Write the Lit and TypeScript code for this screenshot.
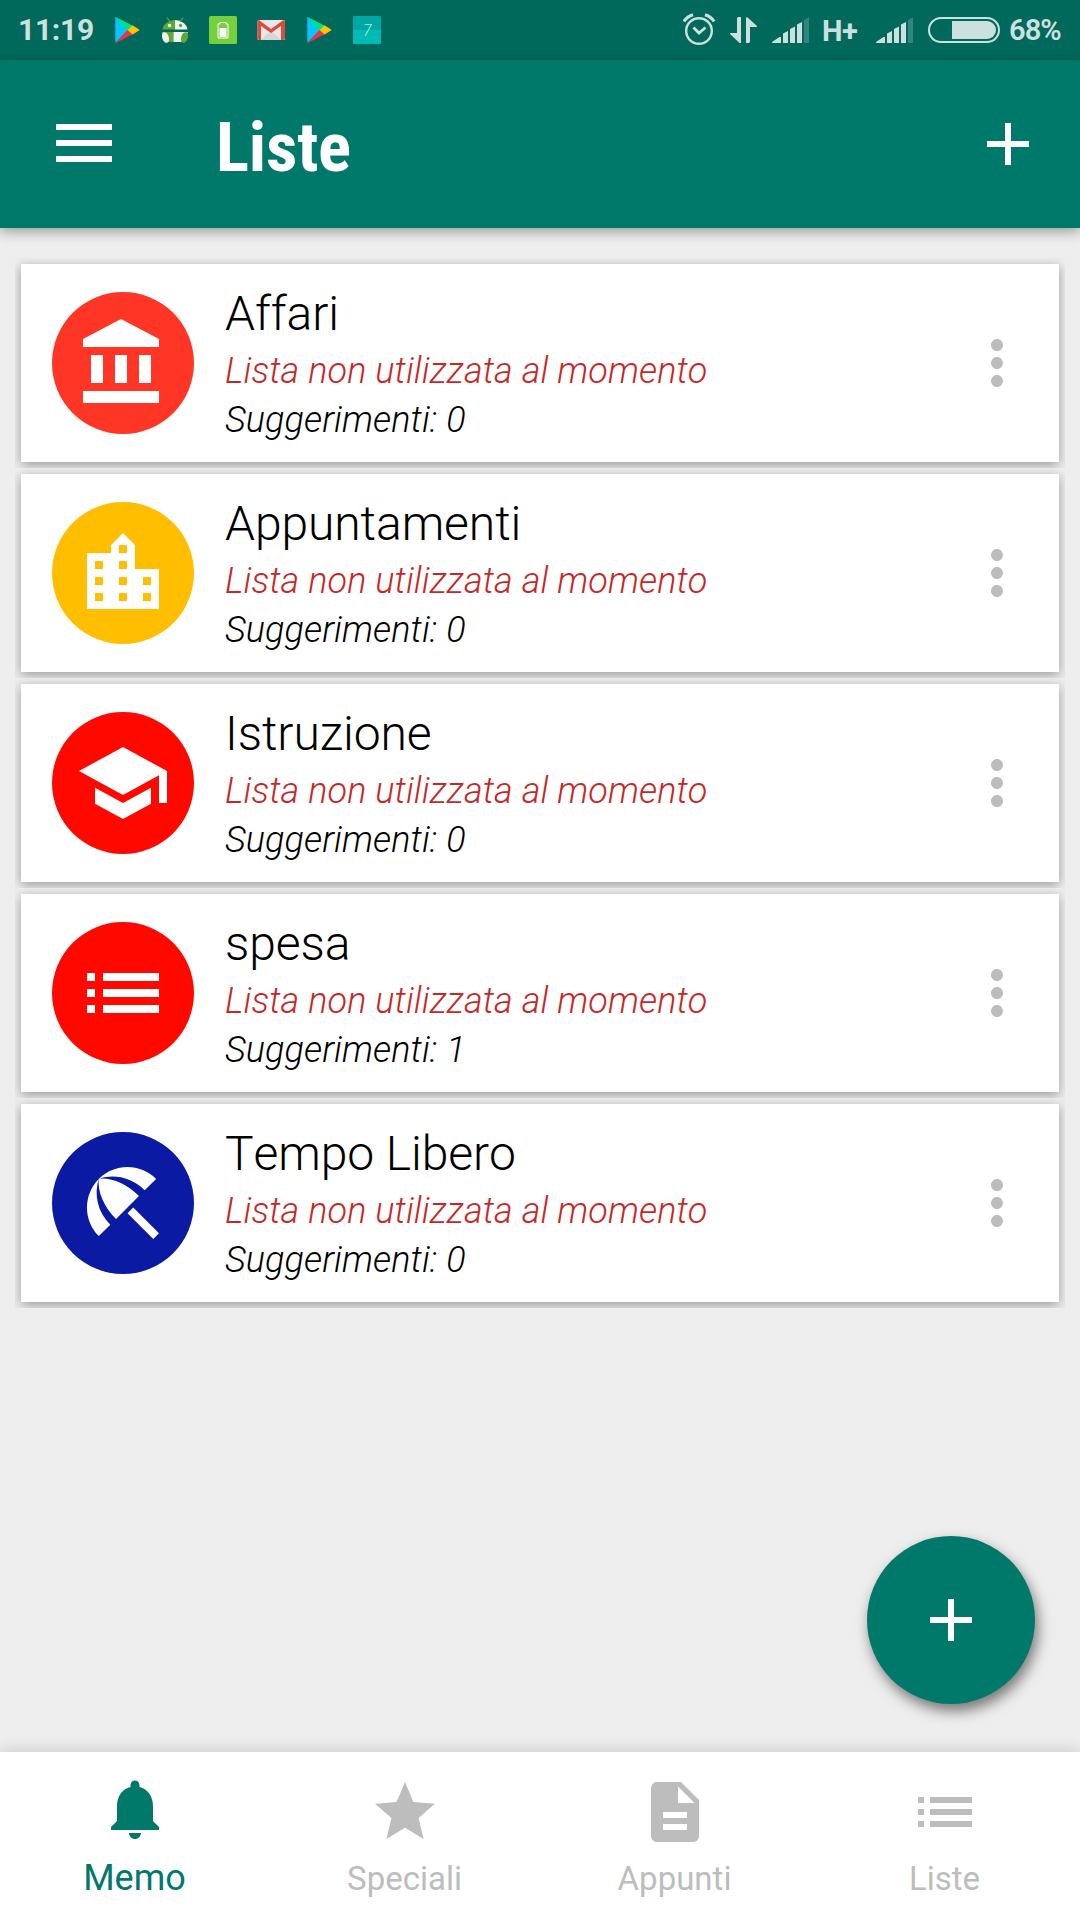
import { LitElement, html, css, svg } from "lit";
import { customElement, property } from "lit/decorators.js";

const ICONS: Record<string, string> = {
  bank: "M4 10v7h3v-7H4zm6 0v7h3v-7h-3zM2 22h19v-3H2v3zm14-12v7h3v-7h-3zm-4.5-9L2 6v2h19V6l-9.5-5z",
  city: "M15 11V5l-3-3-3 3v2H3v14h18V11h-6zm-8 8H5v-2h2v2zm0-4H5v-2h2v2zm0-4H5V9h2v2zm6 8h-2v-2h2v2zm0-4h-2v-2h2v2zm0-4h-2V9h2v2zm0-4h-2V5h2v2zm6 12h-2v-2h2v2zm0-4h-2v-2h2v2z",
  school: "M5 13.18v4L12 21l7-3.82v-4L12 17l-7-3.82zM12 3L1 9l11 6 9-4.91V17h2V9L12 3z",
  list: "M3 13h2v-2H3v2zm0 4h2v-2H3v2zm0-8h2V7H3v2zm4 4h14v-2H7v2zm0 4h14v-2H7v2zM7 7v2h14V7H7z",
  beach: "M13.127 14.56l1.43-1.43 6.44 6.443L19.57 21zm4.293-5.73l2.86-2.86c-3.95-3.95-10.35-3.96-14.3-.02 3.93-1.3 8.31-.25 11.44 2.88zM5.95 5.98c-3.94 3.95-3.93 10.35.02 14.3l2.86-2.86C5.7 14.29 4.65 9.91 5.95 5.98zm.02-.02l-.01.01c-.38 3.01 1.17 6.88 4.3 10.02l5.73-5.73c-3.13-3.13-7.01-4.68-10.02-4.3z",
  bell: "M12 22c1.1 0 2-.9 2-2h-4c0 1.1.89 2 2 2zm6-6v-5c0-3.07-1.64-5.64-4.5-6.32V4c0-.83-.67-1.5-1.5-1.5s-1.5.67-1.5 1.5v.68C7.63 5.36 6 7.92 6 11v5l-2 2v1h16v-1l-2-2z",
  star: "M12 17.27L18.18 21l-1.64-7.03L22 9.24l-7.19-.61L12 2 9.19 8.63 2 9.24l5.46 4.73L5.82 21z",
  note: "M14 2H6c-1.1 0-1.99.9-1.99 2L4 20c0 1.1.89 2 1.99 2H18c1.1 0 2-.9 2-2V8l-6-6zm2 16H8v-2h8v2zm0-4H8v-2h8v2zm-3-5V3.5L18.5 9H13z",
  add: "M19 13h-6v6h-2v-6H5v-2h6V5h2v6h6v2z",
  more: "M12 8c1.1 0 2-.9 2-2s-.9-2-2-2-2 .9-2 2 .9 2 2 2zm0 2c-1.1 0-2 .9-2 2s.9 2 2 2 2-.9 2-2-.9-2-2-2zm0 6c-1.1 0-2 .9-2 2s.9 2 2 2 2-.9 2-2-.9-2-2-2z",
};

@customElement("md-icon")
class MdIcon extends LitElement {
  @property() name = "";
  static styles = css`
    :host { display: block; width: 72px; height: 72px; flex: none; }
    svg { display: block; width: 100%; height: 100%; fill: currentColor; }
  `;
  render() {
    return html`<svg viewBox="0 0 24 24"><path d=${ICONS[this.name] ?? ""} /></svg>`;
  }
}

const playStore = svg`
  <path d="M0 0L0 26L13 13Z" fill="#00c8ff"/>
  <path d="M0 0L17.5 9L12.5 13.5Z" fill="#00e676"/>
  <path d="M0 26.5L12.5 13L17.5 17.6Z" fill="#f4304a"/>
  <path d="M17.3 8.6L24.5 13.2L17.3 17.8L12.3 13.2Z" fill="#ffc400"/>`;

@customElement("status-bar")
class StatusBar extends LitElement {
  static styles = css`
    :host { display: flex; height: 60px; flex: none; background: #00695c; color: #cce1de;
      font: 500 30px/36px Roboto, sans-serif; justify-content: space-between; align-items: flex-start; }
    .side { display: flex; align-items: flex-start; }
    svg { display: block; flex: none; height: 60px; }
    .time { width: 74px; margin-left: 18px; padding-top: 12px; font-weight: 700; letter-spacing: -0.3px; white-space: nowrap; }
    .apps { margin-left: 23px; }
    .net { width: 37px; padding-top: 13px; margin-left: 13px; font-size: 29px; font-weight: 700; letter-spacing: -0.5px; white-space: nowrap; }
    .bars2 { margin-left: 17px; }
    .battery { margin-left: 15px; }
    .pct { width: 71px; padding-top: 12px; margin-left: 9px; font-size: 29px; white-space: nowrap; font-weight: 600; letter-spacing: -0.9px; }
  `;
  bars(cls: string) {
    return html`<svg class=${cls} width="37" viewBox="0 0 37 60" fill="#cce1de">
      <path d="M0 43V42L7.500 37H9V43ZM11 33.500L16 31V43H11ZM18 29L23 26.500V43H18ZM25 24.500L30 22V43H25Z"/>
      <path d="M32 20L37 17.500V43H32Z" opacity=".25"/></svg>`;
  }
  render() {
    return html`
      <div class="side">
        <div class="time">11:19</div>
        <svg class="apps" width="268" viewBox="115 0 268 60">
          <g transform="translate(115.300 16.700)">${playStore}</g>
          <g>
            <path d="M162.500 29.500A13 10 0 0 1 175 20V29.500Z" fill="#5fa832"/>
            <path d="M175 20A13 10 0 0 1 187.500 29.500H175Z" fill="#f2f4f1"/>
            <path d="M167 17.500l3 4.500M183 17.500l-3 4.500" stroke="#5fa832" stroke-width="1.200"/>
            <circle cx="169.500" cy="25.500" r="1.700" fill="#fff"/><circle cx="180.500" cy="25.500" r="1.700" fill="#5fa832"/>
            <path d="M162 32H173.500V42H168L162 35Z" fill="#5fa832"/>
            <path d="M173.500 32H188L182 42H173.500Z" fill="#f2f4f1"/>
            <ellipse cx="165.500" cy="37.500" rx="3.300" ry="5.500" transform="rotate(-18 165.500 37.500)" fill="#f2f4f1"/>
            <ellipse cx="184.500" cy="37.500" rx="3.300" ry="5.500" transform="rotate(18 184.500 37.500)" fill="#5fa832"/>
          </g>
          <rect x="209" y="16" width="28" height="28" rx="1.500" fill="#76cf3c"/>
          <path d="M220 22.500h6v1.500h2v14h-10v-14h2z" fill="none" stroke="#fff" stroke-width="1"/>
          <rect x="219.500" y="28" width="7" height="9" fill="#fff"/>
          <rect x="257.500" y="20" width="27.500" height="20" rx="1.500" fill="#e8e8e8"/>
          <path d="M261 40L271 30.500L281 40Z" fill="#d6d6d6"/>
          <path d="M257.500 21.500L259 20L271 29L283.500 20L285 21.500V38.500L283.500 40H281V26L271 33L261 26V40H259L257.500 38.500Z" fill="#de4a3e"/>
          <g transform="translate(307.300 16.700)">${playStore}</g>
          <rect x="353" y="16" width="28" height="28" rx="1.500" fill="#00bab4"/>
          <path d="M353 30V17.500L354.500 16H379.500L381 17.500V30Z" fill="#00a7a4"/>
          <text x="363" y="36" font-family="Roboto" font-weight="200" font-size="16" font-style="italic" fill="#e9ffff">7</text>
        </svg>
      </div>
      <div class="side">
        <svg width="89" viewBox="683 0 89 60" fill="none" stroke="#cce1de" stroke-width="2.400">
          <circle cx="699" cy="31" r="12.800"/>
          <path d="M693.500 27.500L699 33L705.500 27.500" stroke-width="2.800"/>
          <path d="M684 21.500Q686.500 17 693 14.800M714 21.500Q711.500 17 705 14.800" stroke-width="3.200"/>
          <path d="M741 17V43H739.500L730 34V33H737V18L738 17ZM746 43V18L747 17L757 26V27H750V42L749 43Z" fill="#cce1de" stroke="none"/>
        </svg>
        ${this.bars("bars1")}
        <div class="net">H+</div>
        ${this.bars("bars2")}
        <svg class="battery" width="72" viewBox="928 0 72 60">
          <rect x="929" y="18" width="70" height="24" rx="12" fill="none" stroke="#cce1de" stroke-width="2"/>
          <path d="M952 21H987A9 9 0 0 1 987 39H952Z" fill="#cce1de"/>
        </svg>
        <div class="pct">68%</div>
      </div>`;
  }
}

interface Item { title: string; icon: string; tone: string; hints: number; }

@customElement("list-card")
class ListCard extends LitElement {
  @property({ attribute: false }) item!: Item;
  static styles = css`
    :host { display: flex; align-items: center; height: 198px; padding-left: 31px; padding-right: 26px;
      box-sizing: border-box; background: #fff; box-shadow: 0 3px 11px rgba(0, 0, 0, 0.36); clip-path: inset(-6px); }
    .disc { width: 142px; height: 142px; border-radius: 50%; display: grid; place-items: center; color: #fff; flex: none; }
    .disc md-icon { width: 96px; height: 96px; }
    .affari { background: #ff3625; } .appuntamenti { background: #ffbf00; }
    .rosso { background: #ff0800; } .blu { background: #0b1aa3; }
    .text { flex: 1; padding-left: 31px; align-self: flex-start; padding-top: 22px; color: #000;
      font-family: Roboto, sans-serif; font-weight: 300; white-space: nowrap; font-kerning: none; }
    .title { font-size: 48px; line-height: 56px; letter-spacing: -0.08px; }
    .sub { font-size: 36px; line-height: 42px; font-style: italic; margin-top: 7px; letter-spacing: 0.1px; }
    .unused { color: #c62828; margin-top: 8px; }
    .more { color: #bdbdbd; }
  `;
  render() {
    const i = this.item;
    return html`
      <div class="disc ${i.tone}"><md-icon name=${i.icon}></md-icon></div>
      <div class="text">
        <div class="title">${i.title}</div>
        <div class="sub unused">Lista non utilizzata al momento</div>
        <div class="sub">Suggerimenti: ${i.hints}</div>
      </div>
      <md-icon class="more" name="more"></md-icon>`;
  }
}

const ITEMS: Item[] = [
  { title: "Affari", icon: "bank", tone: "affari", hints: 0 },
  { title: "Appuntamenti", icon: "city", tone: "appuntamenti", hints: 0 },
  { title: "Istruzione", icon: "school", tone: "rosso", hints: 0 },
  { title: "spesa", icon: "list", tone: "rosso", hints: 1 },
  { title: "Tempo Libero", icon: "beach", tone: "blu", hints: 0 },
];

const TABS = [
  { label: "Memo", icon: "bell", active: true },
  { label: "Speciali", icon: "star", active: false },
  { label: "Appunti", icon: "note", active: false },
  { label: "Liste", icon: "list", active: false },
];

@customElement("app-root")
class AppRoot extends LitElement {
  static styles = css`
    :host { display: flex; flex-direction: column; position: relative; width: 1080px; height: 1920px;
      overflow: hidden; background: #eee; font-family: Roboto, sans-serif; }
    .bar { height: 168px; flex: none; box-sizing: border-box; display: flex; align-items: center; background: #00796b; color: #fff;
      padding: 0 36px 0 56px; box-shadow: 0 4px 12px rgba(0, 0, 0, 0.34); }
    .menu { width: 56px; height: 38px; display: flex; flex-direction: column; justify-content: space-between; flex: none; margin-bottom: 2px; }
    .menu i { height: 6px; background: #fff; }
    h1 { flex: 1; margin: 8px 0 0 104px; font-size: 69px; line-height: 80px; font-weight: 700; letter-spacing: -0.2px;
      font-family: "Roboto Condensed", Roboto, sans-serif; }
    main { flex: 1; display: flex; flex-direction: column; gap: 12px; padding: 36px 21px 0; }
    nav { display: grid; grid-template-columns: repeat(4, 1fr); height: 168px; flex: none; background: #fff;
      box-shadow: 0 -2px 14px rgba(0, 0, 0, 0.14); }
    .tab { display: flex; flex-direction: column; align-items: center; padding-top: 24px; color: #bdbdbd; font-size: 33px; line-height: 40px; }
    .tab span { margin: 11px 1px 0 0; }
    .tab.active { color: #00796b; padding-top: 21px; font-size: 36px; }
    .tab.active span { margin-top: 13px; }
    .fab { position: absolute; right: 45px; bottom: 216px; width: 168px; height: 168px; border-radius: 50%;
      background: #00796b; color: #fff; display: grid; place-items: center; box-shadow: 3px 7px 14px rgba(0, 0, 0, 0.5); }
  `;
  render() {
    return html`
      <status-bar></status-bar>
      <header class="bar">
        <div class="menu"><i></i><i></i><i></i></div>
        <h1>Liste</h1>
        <md-icon name="add"></md-icon>
      </header>
      <main>${ITEMS.map((i) => html`<list-card .item=${i}></list-card>`)}</main>
      <nav>
        ${TABS.map((t) => html`<div class="tab ${t.active ? "active" : ""}"><md-icon name=${t.icon}></md-icon><span>${t.label}</span></div>`)}
      </nav>
      <div class="fab"><md-icon name="add"></md-icon></div>`;
  }
}
